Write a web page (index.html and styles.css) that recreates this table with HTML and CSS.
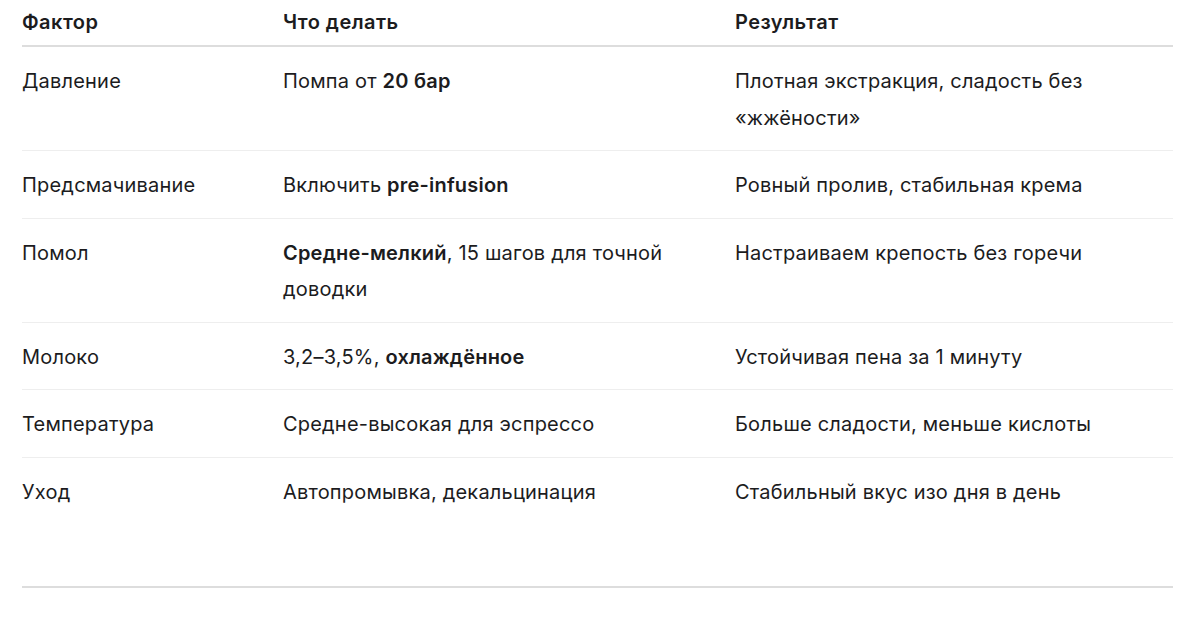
FILE: index.html
```html
<!DOCTYPE html>
<html lang="ru">
<head>
<meta charset="utf-8">
<link rel="stylesheet" href="styles.css">
</head>
<body>
<div class="page">
  <table class="tbl">
    <colgroup>
      <col class="c1"><col class="c2"><col class="c3">
    </colgroup>
    <thead>
      <tr><th>Фактор</th><th>Что делать</th><th>Результат</th></tr>
    </thead>
    <tbody>
      <tr><td>Давление</td><td>Помпа от <b>20 бар</b></td><td>Плотная экстракция, сладость без «жжёности»</td></tr>
      <tr><td>Предсмачивание</td><td>Включить <b>pre-infusion</b></td><td>Ровный пролив, стабильная крема</td></tr>
      <tr><td>Помол</td><td><b>Средне-мелкий</b>, 15 шагов для точной доводки</td><td>Настраиваем крепость без горечи</td></tr>
      <tr><td>Молоко</td><td>3,2–3,5%, <b>охлаждённое</b></td><td>Устойчивая пена за 1 минуту</td></tr>
      <tr><td>Температура</td><td>Средне-высокая для эспрессо</td><td>Больше сладости, меньше кислоты</td></tr>
      <tr class="last"><td>Уход</td><td>Автопромывка, декальцинация</td><td>Стабильный вкус изо дня в день</td></tr>
    </tbody>
  </table>
  <hr class="rule">
</div>
</body>
</html>
```

FILE: styles.css
```css
html, body {
  margin: 0;
  padding: 0;
  background: #ffffff;
}
body {
  font-family: "Inter", "Noto Sans", sans-serif;
  color: #1c1c1e;
  font-size: 20px;
  letter-spacing: 0.2px;
}
.page {
  padding: 0 27px 0 22px;
}
.tbl {
  width: 1151px;
  border-collapse: collapse;
  table-layout: fixed;
}
.c1 { width: 261px; }
.c2 { width: 452px; }
.c3 { width: 438px; }
.tbl th {
  text-align: left;
  font-weight: 600;
  letter-spacing: 0.45px;
  line-height: 36px;
  padding: 4px 24px 5px 0;
  border-bottom: 2px solid #dddddd;
  vertical-align: top;
}
.tbl td {
  line-height: 36.5px;
  padding: 16px 24px 14px 0;
  border-bottom: 1px solid #eeeeee;
  vertical-align: top;
}
.tbl td b {
  font-weight: 600;
}
.tbl tr.last td {
  border-bottom: none;
}
.rule {
  margin: 62px 0 0 0;
  width: 1151px;
  border: none;
  border-top: 2px solid #dddddd;
  height: 0;
}
```
